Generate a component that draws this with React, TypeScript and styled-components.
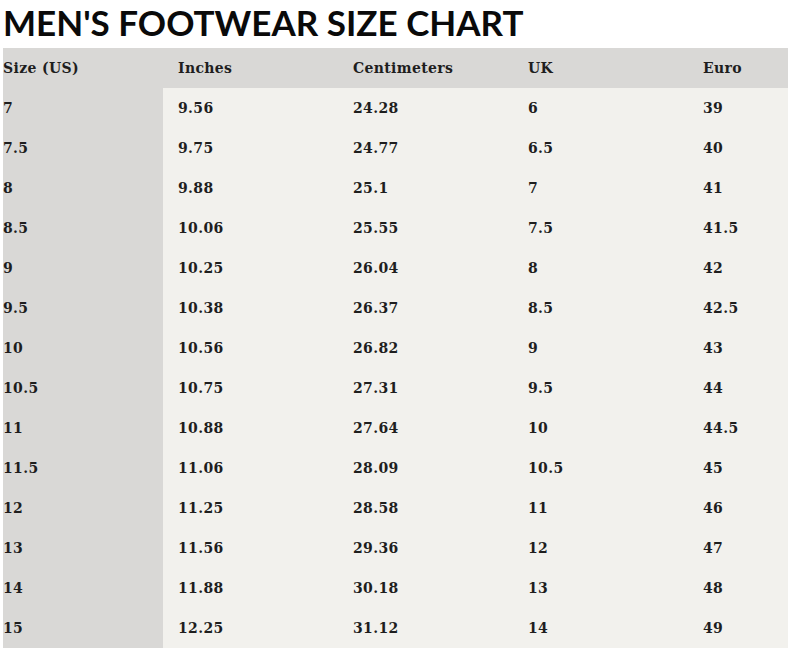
import React from "react";
import styled, { createGlobalStyle } from "styled-components";

const Global = createGlobalStyle`
  html, body { margin: 0; padding: 0; background: #ffffff; }
  body { font-family: "DejaVu Serif", serif; }
`;

const Page = styled.div`
  width: 788px;
  padding: 0 0 0 3px;
  box-sizing: border-box;
`;

const Title = styled.h1`
  margin: 0;
  height: 48px;
  padding-left: 0;
  font-family: "Lato", "Liberation Sans", sans-serif;
  font-weight: 700;
  font-size: 35px;
  line-height: 45px;
  color: #0a0a0a;
`;

const Table = styled.div`
  display: grid;
  grid-template-columns: 160px 175px 175px 175px 100px;
`;

const Cell = styled.div<{ $head?: boolean; $first?: boolean }>`
  height: 40px;
  display: flex;
  align-items: center;
  padding-left: ${(p) => (p.$first ? "0" : "15px")};
  background: ${(p) => (p.$head || p.$first ? "#d9d8d6" : "#f2f1ed")};
  font-family: "DejaVu Serif", serif;
  font-weight: 700;
  font-size: 14px;
  letter-spacing: 0.35px;
  color: #1e1e1e;
  white-space: nowrap;
`;

const headers = ["Size (US)", "Inches", "Centimeters", "UK", "Euro"];
const rows = [
  ["7", "9.56", "24.28", "6", "39"],
  ["7.5", "9.75", "24.77", "6.5", "40"],
  ["8", "9.88", "25.1", "7", "41"],
  ["8.5", "10.06", "25.55", "7.5", "41.5"],
  ["9", "10.25", "26.04", "8", "42"],
  ["9.5", "10.38", "26.37", "8.5", "42.5"],
  ["10", "10.56", "26.82", "9", "43"],
  ["10.5", "10.75", "27.31", "9.5", "44"],
  ["11", "10.88", "27.64", "10", "44.5"],
  ["11.5", "11.06", "28.09", "10.5", "45"],
  ["12", "11.25", "28.58", "11", "46"],
  ["13", "11.56", "29.36", "12", "47"],
  ["14", "11.88", "30.18", "13", "48"],
  ["15", "12.25", "31.12", "14", "49"],
];

export default function App() {
  return (
    <>
      <Global />
      <Page>
        <Title>MEN'S FOOTWEAR SIZE CHART</Title>
        <Table>
          {headers.map((h, i) => (
            <Cell key={h} $head $first={i === 0}>
              {h}
            </Cell>
          ))}
          {rows.map((r, ri) =>
            r.map((v, ci) => (
              <Cell key={`${ri}-${ci}`} $first={ci === 0}>
                {v}
              </Cell>
            ))
          )}
        </Table>
      </Page>
    </>
  );
}
